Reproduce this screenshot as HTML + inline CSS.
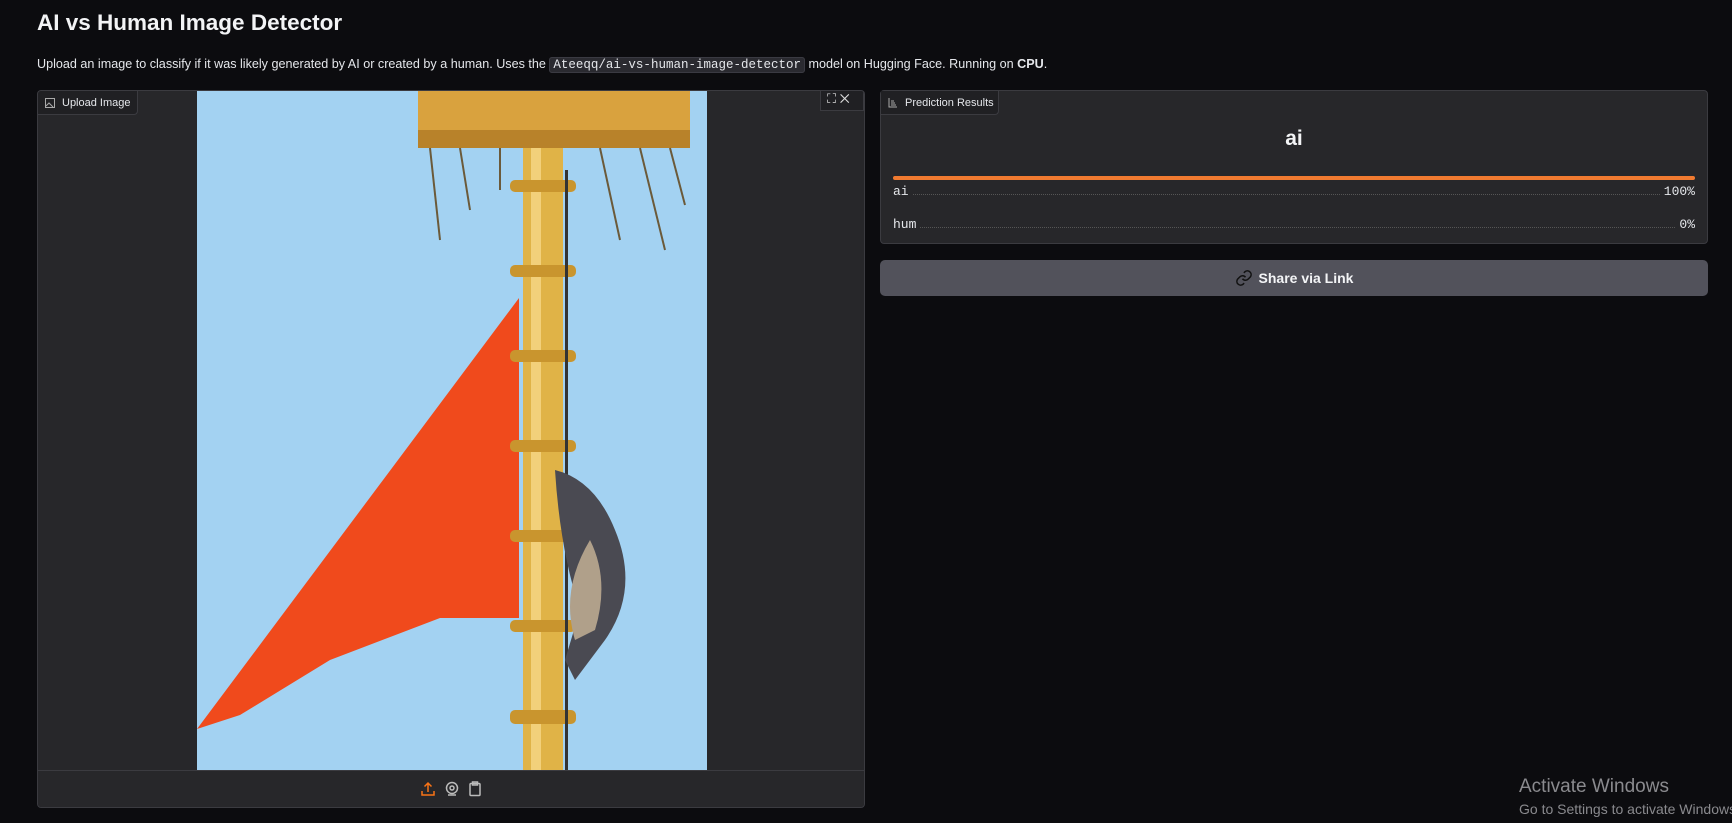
<!DOCTYPE html>
<html><head><meta charset="utf-8"><style>
*{box-sizing:border-box;margin:0;padding:0}
body{width:1732px;height:823px;background:#0c0c0f;color:#e5e7eb;font-family:"Liberation Sans",sans-serif;position:relative;overflow:hidden}
h1{position:absolute;left:37px;top:10px;font-size:22.5px;font-weight:bold;color:#f3f4f6}
.desc{position:absolute;left:37px;top:57px;font-size:12.6px;color:#e5e7eb;white-space:nowrap}
.desc code{font-family:"Liberation Mono",monospace;background:#2a2a30;border:1px solid #3a3a42;border-radius:3px;padding:0 3px;font-size:12.5px}
.panel{position:absolute;background:#27272a;border:1px solid #3b3b40;border-radius:4px}
.tag{position:absolute;left:0;top:0;height:24px;border:1px solid #3b3b40;border-top:none;border-left:none;border-radius:0 0 4px 0;font-size:11px;color:#e5e7eb;padding:6px 8px 0 24px;background:#202023;white-space:nowrap}
.tag svg{position:absolute;left:7px;top:7px}
.mono{font-family:"Liberation Mono",monospace;font-size:13px;color:#e5e7eb}
</style></head><body>
<h1>AI vs Human Image Detector</h1>
<div class="desc">Upload an image to classify if it was likely generated by AI or created by a human. Uses the <code>Ateeqq/ai-vs-human-image-detector</code> model on Hugging Face. Running on <b>CPU</b>.</div>

<div class="panel" style="left:37px;top:90px;width:828px;height:718px;overflow:hidden">
<svg style="position:absolute;left:159px;top:0" width="510" height="681" viewBox="197 91 510 681">
<rect x="197" y="91" width="510" height="681" fill="#a3d2f2"/>
<polygon points="519,298 197,729 240,715 330,660 440,618 519,618" fill="#f04a1c"/>
<rect x="523" y="120" width="40" height="652" fill="#e0b347"/>
<rect x="531" y="120" width="10" height="652" fill="#f2d07a"/>
<g fill="#c9952e"><rect x="510" y="180" width="66" height="12" rx="5"/><rect x="510" y="265" width="66" height="12" rx="5"/><rect x="510" y="350" width="66" height="12" rx="5"/><rect x="510" y="440" width="66" height="12" rx="5"/><rect x="510" y="530" width="66" height="12" rx="5"/><rect x="510" y="620" width="66" height="12" rx="5"/><rect x="510" y="710" width="66" height="14" rx="5"/></g>
<rect x="565" y="170" width="3" height="600" fill="#333"/>
<polygon points="418,91 690,91 690,140 418,140" fill="#d9a23e"/>
<rect x="418" y="130" width="272" height="18" fill="#b8822a"/>
<g stroke="#6b5a3a" stroke-width="2" fill="#b08530">
<line x1="430" y1="148" x2="440" y2="240"/><line x1="460" y1="148" x2="470" y2="210"/><line x1="600" y1="148" x2="620" y2="240"/><line x1="640" y1="148" x2="665" y2="250"/><line x1="670" y1="148" x2="685" y2="205"/><line x1="500" y1="148" x2="500" y2="190"/>
</g>
<path d="M555 470 q40 10 60 60 q25 60 -10 110 l-30 40 l-10 -20 l15 -50 q-20 -60 -25 -140z" fill="#4a4a52"/>
<path d="M590 540 q20 40 5 90 l-20 10 q-15 -50 15 -100z" fill="#b0a08a"/>
</svg>
<div class="tag" style="width:100px"><svg width="10" height="10" viewBox="0 0 10 10" fill="none" stroke="#aaa"><rect x=".5" y=".5" width="9" height="9"/><path d="M1 8l3-3 4 4"/></svg>Upload Image</div>
<div style="position:absolute;right:0;top:0;width:44px;height:20px;background:#202023;border:1px solid #3b3b40;border-top:none;font-size:13px;color:#ddd;padding-left:6px">⛶ ✕</div>
<div style="position:absolute;left:0;bottom:0;width:100%;height:37px;background:#27272a;border-top:1px solid #3b3b40">
<svg style="position:absolute;left:383px;top:10px" width="64" height="16" viewBox="0 0 64 16" fill="none" stroke-width="1.5">
<path d="M7 11V2M3.5 5.5L7 2l3.5 3.5M1 10v4h12v-4" stroke="#f97316"/>
<circle cx="31" cy="7" r="5.5" stroke="#bbb"/><circle cx="31" cy="7" r="2" stroke="#bbb"/><path d="M27 14h8" stroke="#bbb"/>
<rect x="49" y="2.5" width="10" height="12" rx="1" stroke="#bbb"/><rect x="51.5" y="1" width="5" height="3" stroke="#bbb"/>
</svg></div>
</div>

<div class="panel" style="left:880px;top:90px;width:828px;height:154px">
<div class="tag" style="width:118px;background:#202023"><svg width="10" height="10" viewBox="0 0 10 10" fill="none" stroke="#aaa"><path d="M1 0v9h8M3 3h3M3 5h4M3 7h5"/></svg>Prediction Results</div>
<div style="position:absolute;left:0;width:100%;top:36px;text-align:center;font-size:21px;font-weight:bold;color:#f3f4f6">ai</div>
<div style="position:absolute;left:12px;right:12px;top:85px;height:4px;border-radius:2px;background:#f07a30"></div>
<div class="mono" style="position:absolute;left:12px;right:12px;top:93px;display:flex;align-items:flex-end"><span>ai</span><span style="flex:1;border-bottom:1px dotted #555;margin:0 4px 4px"></span><span>100%</span></div>
<div class="mono" style="position:absolute;left:12px;right:12px;top:126px;display:flex;align-items:flex-end"><span>hum</span><span style="flex:1;border-bottom:1px dotted #555;margin:0 4px 4px"></span><span>0%</span></div>
</div>

<div style="position:absolute;left:880px;top:260px;width:828px;height:36px;background:#52525b;border-radius:5px;display:flex;align-items:center;justify-content:center;font-size:14px;font-weight:bold;color:#f3f4f6">
<svg width="18" height="18" viewBox="0 0 24 24" fill="none" stroke="#111" stroke-width="2" style="margin-right:6px"><path d="M10 13a5 5 0 0 0 7.5.5l3-3a5 5 0 0 0-7-7l-1.7 1.7"/><path d="M14 11a5 5 0 0 0-7.5-.5l-3 3a5 5 0 0 0 7 7l1.7-1.7"/></svg>Share via Link</div>

<div style="position:absolute;left:1519px;top:776px;font-size:19px;color:#8a8a8e">Activate Windows</div>
<div style="position:absolute;left:1519px;top:801px;font-size:14px;color:#8a8a8e;white-space:nowrap">Go to Settings to activate Windows.</div>
</body></html>
